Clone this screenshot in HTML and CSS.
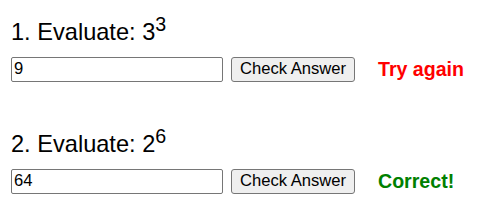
FILE: index.html
```html
<!DOCTYPE html>
<html lang="en">
  <head>
    <meta charset="UTF-8" />
    <meta name="viewport" content="width=device-width, initial-scale=1.0" />
    <title>Exponents Quiz</title>

    <!-- CSS -->
    <link rel="stylesheet" href="styles.css">
  </head>
  <body>
    <div class="quiz">
      <div class="question">
        <h3>1. Evaluate: 3<sup>3</sup></h3>
        <div class="row">
          <input type="text" value="9" />
          <button>Check Answer</button>
          <span class="feedback wrong">Try again</span>
        </div>
      </div>

      <div class="question">
        <h3>2. Evaluate: 2<sup>6</sup></h3>
        <div class="row">
          <input type="text" value="64" />
          <button>Check Answer</button>
          <span class="feedback right">Correct!</span>
        </div>
      </div>
    </div>
  </body>
</html>
```

FILE: styles.css
```css
body {
  margin: 0;
  font-family: "Liberation Sans", Arial, sans-serif;
  font-size: 19.6px;
  color: #000;
}

.quiz {
  display: flex;
  flex-direction: column;
  gap: 43px;
  padding: 13px 11px 0;
}

.question h3 {
  font-size: 23.6px;
  font-weight: normal;
  margin: 0 0 11px;
}

.row {
  display: flex;
  align-items: center;
}

.row input {
  box-sizing: border-box;
  width: 212px;
  height: 25px;
  margin: 0;
  padding: 1px 2px;
  border: 1px solid #767676;
  border-radius: 2px;
  font-family: "Liberation Sans", Arial, sans-serif;
  font-size: 16.6px;
}

.row button {
  box-sizing: border-box;
  width: 124px;
  height: 25px;
  margin: 0 0 0 8px;
  padding: 0;
  background-color: #efefef;
  border: 1px solid #767676;
  border-radius: 3px;
  font-family: "Liberation Sans", Arial, sans-serif;
  font-size: 16.6px;
  color: #000;
}

.feedback {
  margin-left: 23px;
  font-weight: bold;
}

.wrong {
  color: #ff0000;
}

.right {
  color: #008000;
}
```
